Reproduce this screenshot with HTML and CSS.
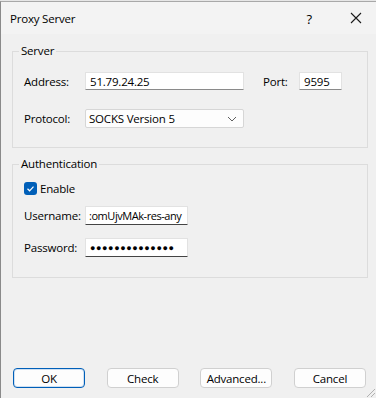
FILE: index.html
```html
<!DOCTYPE html>
<html lang="en">
<head>
    <meta charset="UTF-8">
    <meta name="viewport" content="width=device-width, initial-scale=1.0">
    <title>Proxy Server</title>
    <link rel="stylesheet" href="styles.css">
</head>
<body>
    <div class="window">
        <div class="titlebar">
            <span class="title">Proxy Server</span>
            <span class="help">?</span>
            <span class="close">
                <svg width="12" height="12" viewBox="0 0 12 12">
                    <path d="M1 1 L11 11 M11 1 L1 11" stroke="#1a1a1a" stroke-width="1.1" fill="none"/>
                </svg>
            </span>
        </div>

        <div class="content">
            <fieldset class="group server">
                <legend>Server</legend>
                <div class="row">
                    <label class="label">Address:</label>
                    <input class="field address" type="text" value="51.79.24.25">
                    <label class="label port-label">Port:</label>
                    <input class="field port" type="text" value="9595">
                </div>
                <div class="row protocol-row">
                    <label class="label">Protocol:</label>
                    <div class="select">
                        <span>SOCKS Version 5</span>
                        <svg width="10" height="6" viewBox="0 0 10 6">
                            <path d="M1 1 L5 5 L9 1" stroke="#606060" stroke-width="1" fill="none"/>
                        </svg>
                    </div>
                </div>
            </fieldset>

            <fieldset class="group auth">
                <legend>Authentication</legend>
                <div class="check-row">
                    <span class="checkbox">
                        <svg width="13" height="13" viewBox="0 0 13 13">
                            <path d="M3.5 6.8 L5.6 8.8 L9.5 4.6" stroke="#fff" stroke-width="1.2" fill="none"/>
                        </svg>
                    </span>
                    <span>Enable</span>
                </div>
                <div class="row user-row">
                    <label class="label">Username:</label>
                    <input class="field short user" type="text" value=":omUjvMAk-res-any">
                </div>
                <div class="row pass-row">
                    <label class="label">Password:</label>
                    <input class="field short dots" type="text" value="●●●●●●●●●●●●●●">
                </div>
            </fieldset>
        </div>

        <div class="buttons">
            <button class="btn default">OK</button>
            <button class="btn">Check</button>
            <button class="btn">Advanced...</button>
            <button class="btn">Cancel</button>
        </div>
        <span class="grip"></span>
    </div>
</body>
</html>
```

FILE: styles.css
```css
html, body {
    margin: 0;
    padding: 0;
}
body {
    font-family: "Open Sans", "Noto Sans", Arial, sans-serif;
    font-size: 11.5px;
    letter-spacing: -0.2px;
    color: #000;
    background-color: #e6e6e6;
    width: 376px;
    height: 398px;
    overflow: hidden;
}
.window {
    position: relative;
    box-sizing: border-box;
    height: 397px;
    margin-top: 1px;
    border-top: 1px solid #a8a8a8;
    border-left: 1px solid #8a8a8a;
    background-color: #f0f0f0;
    display: flex;
    flex-direction: column;
}
.titlebar {
    height: 32px;
    display: flex;
    align-items: center;
    padding-left: 9px;
    background-color: #f3f3f3;
}
.title {
    flex: 1;
}
.help {
    font-size: 13px;
    margin-right: 38px;
    padding-top: 1px;
}
.close {
    width: 12px;
    height: 12px;
    margin-right: 14px;
    display: flex;
}
.content {
    padding: 9px 8px 0 11px;
}
.group {
    margin: 0;
    padding: 13px 10px 19px 11px;
    border: 1px solid #dcdcdc;
}
.group legend {
    padding: 0 2px;
    margin-left: -5px;
    line-height: 16px;
}
.auth {
    margin-top: 8px;
    padding-top: 8px;
    padding-bottom: 20px;
}
.row {
    display: flex;
    align-items: center;
    height: 18px;
}
.protocol-row {
    margin-top: 19px;
    height: 19px;
}
.label {
    width: 61px;
    flex-shrink: 0;
}
.port-label {
    width: 36px;
    margin-left: 19px;
}
.field {
    box-sizing: border-box;
    flex-shrink: 0;
    height: 18px;
    margin: 0;
    padding: 0 4px;
    font-family: inherit;
    font-size: 11.5px;
    letter-spacing: -0.2px;
    color: #000;
    background-color: #fff;
    border: 1px solid #e2e2e2;
    border-bottom-color: #8a8a8a;
    border-radius: 1px;
    outline: none;
}
.address {
    width: 159px;
}
.port {
    width: 43px;
}
.select {
    box-sizing: border-box;
    width: 159px;
    height: 19px;
    display: flex;
    align-items: center;
    justify-content: space-between;
    padding: 0 6px 0 3px;
    background-color: #fdfdfd;
    border: 1px solid #d6d6d6;
    border-radius: 2px;
}
.check-row {
    display: flex;
    align-items: center;
    gap: 3px;
    height: 16px;
}
.checkbox {
    width: 13px;
    height: 13px;
    border-radius: 3px;
    background-color: #005fb8;
    display: flex;
}
.user-row {
    margin-top: 10px;
    height: 19px;
}
.user-row .field {
    height: 19px;
}
.pass-row {
    margin-top: 13px;
    height: 19px;
}
.pass-row .field {
    height: 19px;
}
.short {
    width: 103px;
    border-bottom-color: #444;
}
.user {
    padding: 0 2px 0 3px;
    font-size: 11px;
    letter-spacing: -0.45px;
}
.dots {
    font-size: 9px;
    letter-spacing: 0.6px;
}
.buttons {
    margin-top: auto;
    display: flex;
    justify-content: space-between;
    padding: 0 10px 10px 12px;
}
.btn {
    box-sizing: border-box;
    width: 72px;
    height: 20px;
    padding: 0;
    font-family: inherit;
    font-size: 11.5px;
    letter-spacing: -0.2px;
    color: #000;
    background-color: #fdfdfd;
    border: 1px solid #d0d0d0;
    border-radius: 4px;
}
.btn.default {
    border: 1px solid #005fb8;
    box-shadow: inset 0 0 0 1px #cfe0f2;
}
.grip {
    position: absolute;
    right: 1px;
    bottom: 1px;
    width: 8px;
    height: 8px;
    background: linear-gradient(135deg, transparent 45%, #b0b0b0 46%, #b0b0b0 52%, transparent 53%, transparent 70%, #b0b0b0 71%, #b0b0b0 77%, transparent 78%);
}
```
